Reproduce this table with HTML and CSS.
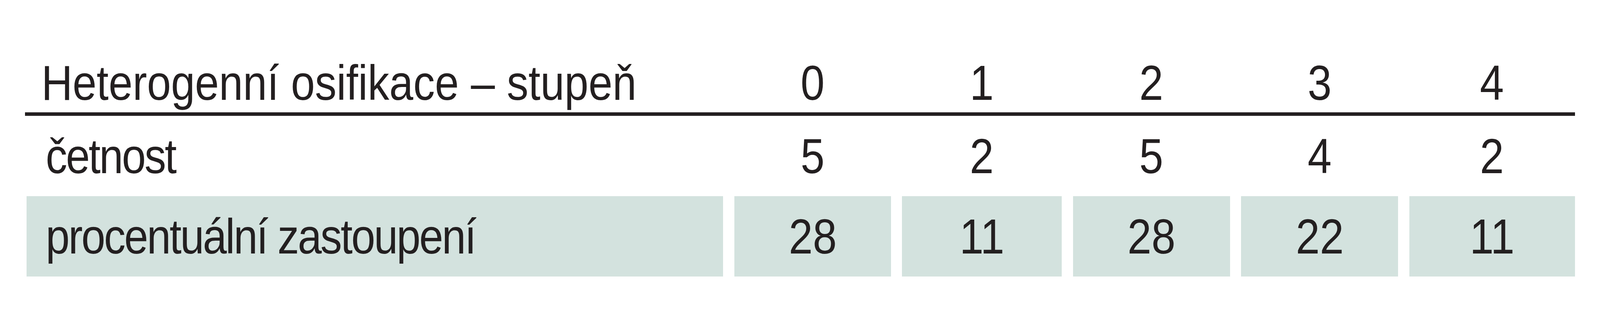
FILE: index.html
```html
<!DOCTYPE html>
<html lang="cs">
<head>
<meta charset="utf-8">
<title>Heterogenní osifikace</title>
<link rel="stylesheet" href="styles.css">
</head>
<body>
<div class="table">
  <div class="row head">
    <div class="cell label"><span class="txt">Heterogenní osifikace – stupeň</span></div>
    <div class="cell num"><span class="txt">0</span></div>
    <div class="cell num"><span class="txt">1</span></div>
    <div class="cell num"><span class="txt">2</span></div>
    <div class="cell num"><span class="txt">3</span></div>
    <div class="cell num"><span class="txt">4</span></div>
  </div>
  <div class="row body">
    <div class="cell label"><span class="txt">četnost</span></div>
    <div class="cell num"><span class="txt">5</span></div>
    <div class="cell num"><span class="txt">2</span></div>
    <div class="cell num"><span class="txt">5</span></div>
    <div class="cell num"><span class="txt">4</span></div>
    <div class="cell num"><span class="txt">2</span></div>
  </div>
  <div class="row body shaded">
    <div class="cell label"><span class="txt">procentuální zastoupení</span></div>
    <div class="cell num"><span class="txt">28</span></div>
    <div class="cell num"><span class="txt">11</span></div>
    <div class="cell num"><span class="txt">28</span></div>
    <div class="cell num"><span class="txt">22</span></div>
    <div class="cell num"><span class="txt">11</span></div>
  </div>
</div>
</body>
</html>
```

FILE: styles.css
```css
:root {
  --u: calc(100vw / 4709);
}

html, body {
  margin: 0;
  padding: 0;
  background: #ffffff;
  overflow: hidden;
}

body {
  font-family: "Liberation Sans", Arial, sans-serif;
  color: #231f20;
}

.table {
  margin: 137px 0 0 calc(74 * var(--u));
  width: calc(4561 * var(--u));
}

.row {
  display: grid;
  grid-template-columns:
    calc(2050 * var(--u)) calc(461 * var(--u)) calc(470 * var(--u))
    calc(462 * var(--u)) calc(462 * var(--u)) calc(487 * var(--u));
  column-gap: calc(33 * var(--u));
  padding-left: calc(4 * var(--u));
  font-size: 127px;
}

.head {
  line-height: 150px;
  padding-bottom: 1px;
  border-bottom: 9px solid #231f20;
}

.body {
  line-height: 206px;
}

.cell {
  white-space: nowrap;
}

.txt {
  display: inline-block;
  transform: scaleX(0.87);
}

.label .txt {
  transform-origin: left center;
}

.num .txt {
  transform-origin: center center;
}

.head .label {
  padding-left: calc(44 * var(--u));
}

.body .label {
  padding-left: calc(56 * var(--u));
}

.body .label .txt {
  letter-spacing: -4px;
}

.num {
  text-align: center;
}

.shaded .cell {
  background: #d3e2de;
}
```
